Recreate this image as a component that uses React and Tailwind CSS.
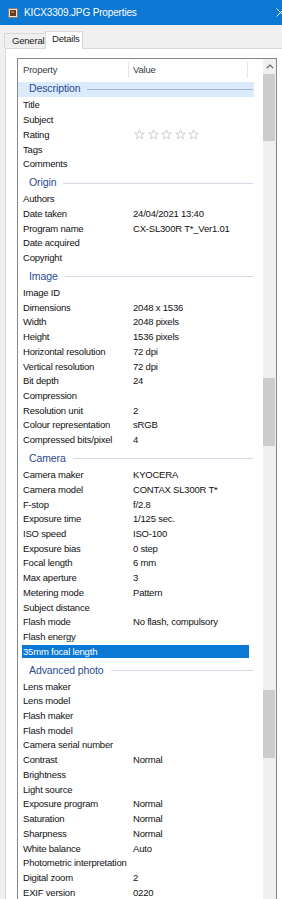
import React from 'react';

const groups = [
  {
    name: 'Description',
    focused: true,
    rows: [['Title'], ['Subject'], ['Rating', 'stars'], ['Tags'], ['Comments']],
  },
  {
    name: 'Origin',
    rows: [
      ['Authors'],
      ['Date taken', '24/04/2021 13:40'],
      ['Program name', 'CX-SL300R T*_Ver1.01'],
      ['Date acquired'],
      ['Copyright'],
    ],
  },
  {
    name: 'Image',
    rows: [
      ['Image ID'],
      ['Dimensions', '2048 x 1536'],
      ['Width', '2048 pixels'],
      ['Height', '1536 pixels'],
      ['Horizontal resolution', '72 dpi'],
      ['Vertical resolution', '72 dpi'],
      ['Bit depth', '24'],
      ['Compression'],
      ['Resolution unit', '2'],
      ['Colour representation', 'sRGB'],
      ['Compressed bits/pixel', '4'],
    ],
  },
  {
    name: 'Camera',
    rows: [
      ['Camera maker', 'KYOCERA'],
      ['Camera model', 'CONTAX SL300R T*'],
      ['F-stop', 'f/2.8'],
      ['Exposure time', '1/125 sec.'],
      ['ISO speed', 'ISO-100'],
      ['Exposure bias', '0 step'],
      ['Focal length', '6 mm'],
      ['Max aperture', '3'],
      ['Metering mode', 'Pattern'],
      ['Subject distance'],
      ['Flash mode', 'No flash, compulsory'],
      ['Flash energy'],
      ['35mm focal length', '', true],
    ],
  },
  {
    name: 'Advanced photo',
    rows: [
      ['Lens maker'],
      ['Lens model'],
      ['Flash maker'],
      ['Flash model'],
      ['Camera serial number'],
      ['Contrast', 'Normal'],
      ['Brightness'],
      ['Light source'],
      ['Exposure program', 'Normal'],
      ['Saturation', 'Normal'],
      ['Sharpness', 'Normal'],
      ['White balance', 'Auto'],
      ['Photometric interpretation'],
      ['Digital zoom', '2'],
      ['EXIF version', '0220'],
    ],
  },
];

function Stars() {
  return (
    <div className="flex gap-[2.5px] pl-[1px]">
      {[0, 1, 2, 3, 4].map(i => (
        <svg key={i} width="11" height="11" viewBox="0 0 20 20">
          <polygon
            points="10,1.5 12.4,7.3 18.6,7.6 13.8,11.6 15.4,17.8 10,14.3 4.6,17.8 6.2,11.6 1.4,7.6 7.6,7.3"
            fill="none"
            stroke="#bdbdbd"
            strokeWidth="1.3"
            strokeLinejoin="round"
          />
        </svg>
      ))}
    </div>
  );
}

function GroupHeader({ name, focused }) {
  return (
    <div className="h-[20.2px] pt-[4px]">
      <div className={`h-[14.5px] w-[236px] flex items-center pl-[11px] pr-[1px] ${focused ? 'bg-[#dcebfb]' : ''}`}>
        <span className="text-[#2b4a94] text-[10.5px] tracking-[-0.1px] whitespace-nowrap">{name}</span>
        <div className={`flex-1 h-px ml-[7px] ${focused ? 'bg-[#9fb5d3]' : 'bg-[#d3dbe6]'}`} />
      </div>
    </div>
  );
}

function Row({ label, value, selected }) {
  return (
    <div className="h-[14.73px] pl-[4px] flex items-center">
      <div className={`w-[227px] h-[13.3px] flex items-center ${selected ? 'bg-[#0a78d5] text-white' : 'text-[#111]'}`}>
        <div className="w-[106px] pl-[1px] whitespace-nowrap">{label}</div>
        <div className="pl-[5px] whitespace-nowrap">
          {value === 'stars' ? <Stars /> : value}
        </div>
      </div>
    </div>
  );
}

function Scrollbar() {
  return (
    <div className="w-[13px] bg-[#f0f0f0] flex flex-col items-start">
      <div className="h-[15px] w-full flex items-center justify-center">
        <svg width="8" height="5" viewBox="0 0 8 5">
          <path d="M0.8 4.2 L4 1 L7.2 4.2" fill="none" stroke="#606060" strokeWidth="1.2" />
        </svg>
      </div>
      <div className="h-[67px] w-[12px] bg-[#cdcdcd]" />
      <div className="mt-[237px] h-[68px] w-[12px] bg-[#cdcdcd]" />
      <div className="mt-[244px] h-[68px] w-[12px] bg-[#cdcdcd]" />
    </div>
  );
}

export default function App() {
  return (
    <div className="w-[282px] h-[899px] overflow-hidden bg-[#f0f0f0] text-[9.5px] tracking-[-0.2px] font-['Liberation_Sans','Noto_Sans',sans-serif]">
      {/* Title bar */}
      <div className="h-[25px] bg-[#0b78d4] flex items-center relative">
        <svg className="ml-[8px]" width="10" height="10" viewBox="0 0 10 10">
          <rect x="0.5" y="0.5" width="9" height="9" fill="#e8e4de" stroke="#8a7b6a" strokeWidth="1" />
          <rect x="2" y="2" width="6" height="6" fill="#6b3a22" />
          <rect x="3" y="3" width="3" height="2" fill="#b06a3e" />
        </svg>
        <span className="ml-[6px] text-white text-[10px] tracking-[-0.15px]">KICX3309.JPG Properties</span>
        <svg className="absolute left-[276px] top-[8px]" width="9" height="9" viewBox="0 0 9 9">
          <path d="M0.5 0.5 L8.5 8.5 M8.5 0.5 L0.5 8.5" stroke="#ffffff" strokeWidth="1" />
        </svg>
      </div>

      {/* Tabs */}
      <div className="h-[23px] flex items-end pl-[4px]">
        <div className="h-[15px] w-[41px] flex items-center pl-[7px] border-t border-l border-[#d9d9d9] text-[#222]">
          General
        </div>
        <div className="h-[18px] w-[38px] flex items-center pl-[6px] pb-[2px] bg-white border-t border-l border-r border-[#d9d9d9] text-[#222] -mb-px relative">
          Details
        </div>
      </div>

      {/* Panel */}
      <div className="ml-[5px] bg-white border-t border-l border-[#d9d9d9] pt-[9px] pl-[11px] h-full">
        <div className="w-[260px] border border-[#828790] flex">
          <div className="w-[245px]">
            {/* Column header */}
            <div className="h-[19px] flex items-center pt-[3px] text-[#333d4a]">
              <div className="w-[110px] pl-[5px]">Property</div>
              <div className="w-px h-full bg-[#e5e5e5]" />
              <div className="w-[118px] pl-[4px]">Value</div>
              <div className="w-px h-full bg-[#e5e5e5]" />
            </div>

            {groups.map(g => (
              <div key={g.name}>
                <GroupHeader name={g.name} focused={g.focused} />
                {g.rows.map(r => (
                  <Row key={r[0]} label={r[0]} value={r[1]} selected={r[2]} />
                ))}
              </div>
            ))}
          </div>
          <Scrollbar />
        </div>
      </div>
    </div>
  );
}
